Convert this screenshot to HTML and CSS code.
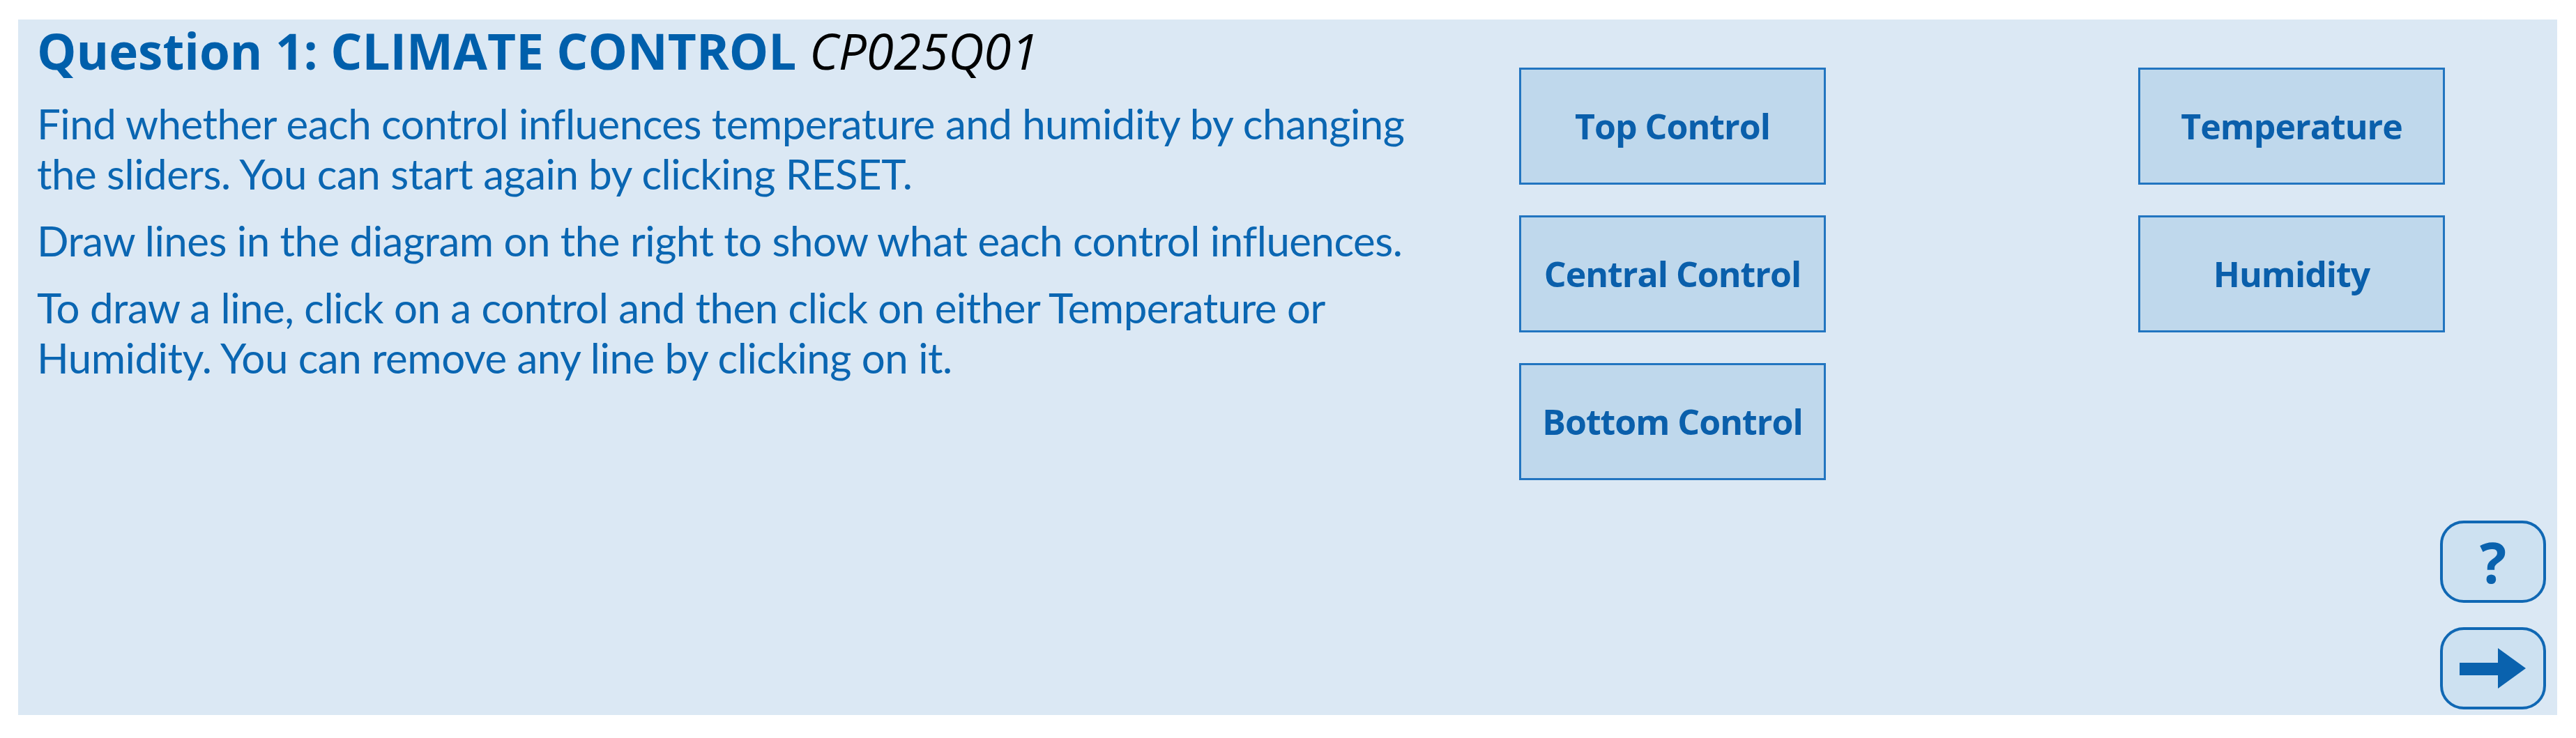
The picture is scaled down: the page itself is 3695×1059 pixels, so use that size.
FILE: index.html
```html
<!DOCTYPE html>
<html lang="en">
<head>
<meta charset="utf-8">
<title>Question 1: CLIMATE CONTROL</title>
<link rel="stylesheet" href="styles.css">
</head>
<body>
<main class="panel">
  <section class="intro">
    <h1 class="title">Question 1: CLIMATE CONTROL <span class="code">CP025Q01</span></h1>
    <p class="para">Find whether each control influences temperature and humidity by changing<br>the sliders. You can start again by clicking RESET.</p>
    <p class="para">Draw lines in the diagram on the right to show what each control influences.</p>
    <p class="para">To draw a line, click on a control and then click on either Temperature or<br>Humidity. You can remove any line by clicking on it.</p>
  </section>
  <section class="side">
    <div class="diagram">
      <div class="node">Top Control</div>
      <div class="node">Temperature</div>
      <div class="node">Central Control</div>
      <div class="node">Humidity</div>
      <div class="node">Bottom Control</div>
    </div>
    <div class="nav">
      <button class="navbtn help" type="button" aria-label="Help">?</button>
      <button class="navbtn next" type="button" aria-label="Next">
        <svg width="96" height="58" viewBox="0 0 96 58" aria-hidden="true">
          <path d="M0 21 H55 V0 L95 29 L55 58 V39 H0 Z" fill="#0a62ae"/>
        </svg>
      </button>
    </div>
  </section>
</main>
</body>
</html>
```

FILE: styles.css
```css
html, body {
  margin: 0;
  padding: 0;
  background: #ffffff;
}

body {
  width: 3695px;
  height: 1059px;
  font-family: "Open Sans", "Noto Sans", sans-serif;
}

.panel {
  box-sizing: border-box;
  margin: 28px 0 0 26px;
  width: 3642px;
  height: 998px;
  background: #dbe8f4;
  display: grid;
  grid-template-columns: 2126px 1fr;
  padding: 3px 16px 8px 27px;
}

.intro {
  color: #0a66b2;
}

.title {
  margin: 0;
  font-size: 71px;
  line-height: 84px;
  font-weight: 700;
  color: #005fab;
  white-space: nowrap;
}

.code {
  font-weight: 400;
  font-style: italic;
  color: #000000;
}

.para {
  margin: 0 0 24px 0;
  font-family: Lato, "Open Sans", sans-serif;
  font-size: 60px;
  letter-spacing: -0.5px;
  line-height: 72px;
  white-space: nowrap;
}

.title + .para {
  margin-top: 26px;
}

.side {
  display: flex;
  flex-direction: column;
}

.diagram {
  margin-top: 66px;
  display: grid;
  grid-template-columns: 440px 440px;
  grid-auto-rows: 168px;
  column-gap: 448px;
  row-gap: 44px;
}

.node {
  box-sizing: border-box;
  border: 3px solid #2275c0;
  background: #bfd8ec;
  color: #0a5fab;
  font-weight: 700;
  font-size: 50px;
  letter-spacing: -1px;
  display: flex;
  align-items: center;
  justify-content: center;
  white-space: nowrap;
}

.nav {
  margin-top: auto;
  align-self: flex-end;
  display: flex;
  flex-direction: column;
  gap: 35px;
}

.navbtn {
  box-sizing: border-box;
  width: 152px;
  height: 118px;
  border: 4px solid #1068b4;
  border-radius: 34px;
  background: #cde1f1;
  color: #0a62ae;
  padding: 0;
  display: flex;
  align-items: center;
  justify-content: center;
  font-family: "Open Sans", "Noto Sans", sans-serif;
  font-weight: 700;
  font-size: 80px;
  line-height: 1;
}
```
